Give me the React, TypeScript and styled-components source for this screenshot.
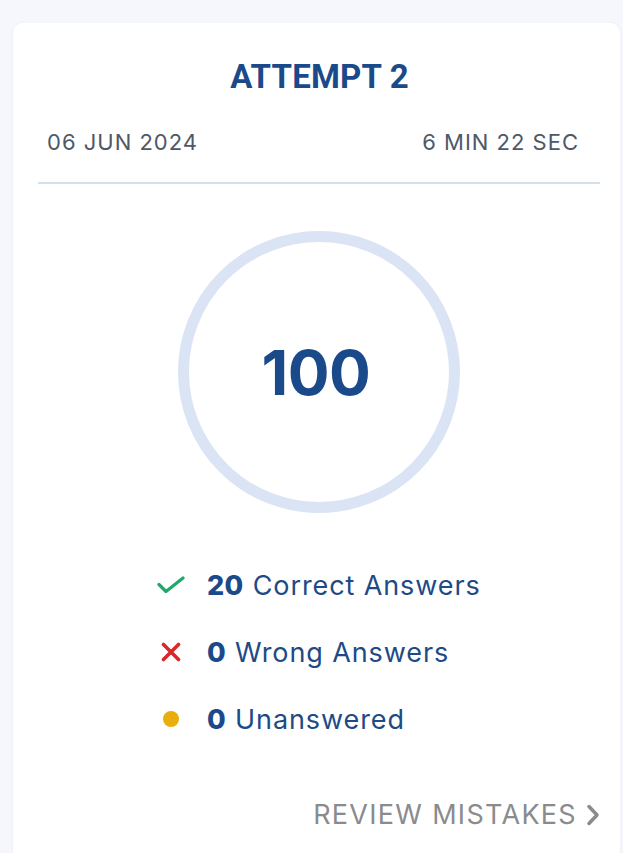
import React from "react";
import styled, { createGlobalStyle } from "styled-components";

const Global = createGlobalStyle`
  html, body { margin: 0; padding: 0; background: #f5f7fc; }
  body { font-family: Inter, "Noto Sans", sans-serif; }
`;

const Page = styled.div`
  padding: 23px 3px 0 13px;
  height: 853px;
  box-sizing: border-box;
  overflow: hidden;
`;

const Card = styled.div`
  background: #ffffff;
  border-radius: 10px;
  box-shadow: 0 1px 4px rgba(30, 60, 120, 0.06);
  padding: 34px 20px 40px 25px;
  display: flex;
  flex-direction: column;
  min-height: 900px;
`;

const Title = styled.h2`
  margin: 0;
  text-align: center;
  font-family: Roboto, "Liberation Sans", sans-serif;
  font-weight: 700;
  font-size: 33px;
  line-height: 40px;
  color: #1b4a8a;
  letter-spacing: 0.2px;
  padding-left: 1px;
`;

const MetaRow = styled.div`
  display: flex;
  justify-content: space-between;
  padding: 0 21px 0 9px;
  margin-top: 31px;
  font-family: Inter, sans-serif;
  font-size: 22px;
  line-height: 28px;
  letter-spacing: 1px;
  color: #4e5866;
`;

const Divider = styled.hr`
  border: none;
  height: 2px;
  background: #d3dfea;
  margin: 26px 0 0 0;
`;

const Ring = styled.div`
  align-self: center;
  margin-top: 47px;
  width: 282px;
  height: 282px;
  box-sizing: border-box;
  border-radius: 50%;
  border: 11px solid #dae4f5;
  display: flex;
  align-items: center;
  justify-content: center;
`;

const Score = styled.div`
  font-family: Inter, sans-serif;
  font-weight: 700;
  font-size: 62px;
  color: #1b4a8a;
  letter-spacing: -0.5px;
  margin-right: 6px;
`;

const Stats = styled.ul`
  list-style: none;
  margin: 54px 0 0 0;
  padding: 0 0 0 118px;
  display: flex;
  flex-direction: column;
  gap: 31px;
`;

const Stat = styled.li`
  display: flex;
  align-items: center;
  height: 36px;
  font-family: Inter, sans-serif;
  font-size: 27px;
  letter-spacing: 0.9px;
  color: #1e4a86;
`;

const IconBox = styled.span`
  width: 30px;
  display: flex;
  justify-content: center;
  margin-right: 21px;
`;

const Dot = styled.span`
  width: 16px;
  height: 16px;
  border-radius: 50%;
  background: #e9ae0b;
`;

const Num = styled.b`
  font-weight: 800;
  margin-right: 9px;
  letter-spacing: 0.4px;
  color: #1b4a8a;
`;

const Review = styled.a`
  align-self: flex-end;
  margin-top: 61px;
  display: flex;
  align-items: center;
  gap: 9px;
  font-family: Inter, sans-serif;
  font-size: 27px;
  line-height: 34px;
  color: #8a8b8e;
  text-decoration: none;
  letter-spacing: 1.3px;
`;

export default function App() {
  return (
    <>
      <Global />
      <Page>
        <Card>
          <Title>ATTEMPT 2</Title>
          <MetaRow>
            <span>06 JUN 2024</span>
            <span>6 MIN 22 SEC</span>
          </MetaRow>
          <Divider />
          <Ring>
            <Score>100</Score>
          </Ring>
          <Stats>
            <Stat>
              <IconBox>
                <svg width="30" height="18" viewBox="0 0 30 18" fill="none">
                  <path d="M3 8.5 L10 15.5 L27 2" stroke="#1fa86a" strokeWidth="3.2" strokeLinecap="round" strokeLinejoin="round" />
                </svg>
              </IconBox>
              <Num>20</Num>Correct Answers
            </Stat>
            <Stat>
              <IconBox>
                <svg width="22" height="20" viewBox="0 0 22 20" fill="none">
                  <path d="M3.5 2.5 L18.5 17.5 M18.5 2.5 L3.5 17.5" stroke="#d8282a" strokeWidth="3.6" strokeLinecap="round" />
                </svg>
              </IconBox>
              <Num>0</Num>Wrong Answers
            </Stat>
            <Stat>
              <IconBox>
                <Dot />
              </IconBox>
              <Num>0</Num>Unanswered
            </Stat>
          </Stats>
          <Review href="#">
            REVIEW MISTAKES
            <svg width="14" height="24" viewBox="0 0 14 24" fill="none">
              <path d="M3 3.5 L11 12 L3 20.5" stroke="#8a8b8e" strokeWidth="3.5" strokeLinecap="round" strokeLinejoin="round" />
            </svg>
          </Review>
        </Card>
      </Page>
    </>
  );
}
